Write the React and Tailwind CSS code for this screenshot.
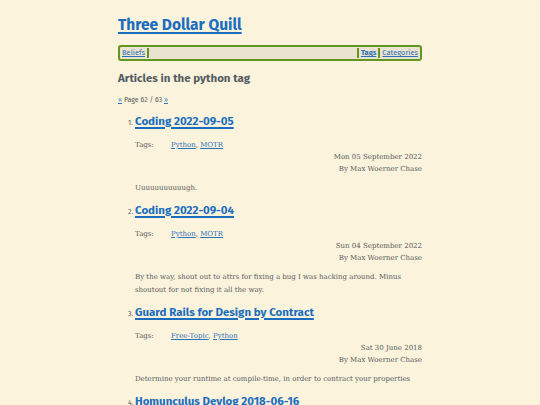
export default function App() {
  const articles = [
    {
      title: 'Coding 2022-09-05',
      tags: ['Python', 'MOTR'],
      date: 'Mon 05 September 2022',
      summary: 'Uuuuuuuuuuugh.',
    },
    {
      title: 'Coding 2022-09-04',
      tags: ['Python', 'MOTR'],
      date: 'Sun 04 September 2022',
      summary:
        'By the way, shout out to attrs for fixing a bug I was hacking around. Minus shoutout for not fixing it all the way.',
    },
    {
      title: 'Guard Rails for Design by Contract',
      tags: ['Free-Topic', 'Python'],
      date: 'Sat 30 June 2018',
      summary: 'Determine your runtime at compile-time, in order to contract your properties',
    },
    {
      title: 'Homunculus Devlog 2018-06-16',
      tags: ['Python'],
      date: 'Sat 16 June 2018',
      summary: '',
    },
  ]

  const heading = { fontFamily: '"Fira Sans", "Open Sans", "Noto Sans", sans-serif' }
  const body = { fontFamily: '"Roboto Slab", "DejaVu Serif", serif' }

  return (
    <div className="min-h-screen w-full bg-[#fcf3dc] text-[#555b60]" style={body}>
      <div className="mx-auto w-[304px] pt-[13px]">
        {/* Site title */}
        <h1 className="text-[15.5px] font-bold leading-[24px]" style={heading}>
          <a href="#" className="text-[#1a6dbf] underline decoration-2 underline-offset-2">Three Dollar Quill</a>
        </h1>

        {/* Nav */}
        <nav
          className="mt-[8px] flex h-[16px] items-center rounded-[3px] border-2 border-[#63961e] bg-[#eae3cf] px-[2px] text-[7.5px] leading-none"
          style={heading}
        >
          <a href="#" className="text-[#2d72b8] underline">Beliefs</a>
          <span className="ml-[2px] h-[10px] w-[2px] bg-[#63961e]" />
          <div className="flex-1" />
          <span className="mr-[2px] h-[10px] w-[2px] bg-[#63961e]" />
          <a href="#" className="font-bold text-[#2d72b8] underline">Tags</a>
          <span className="mx-[2px] h-[10px] w-[2px] bg-[#63961e]" />
          <a href="#" className="text-[#2d72b8] underline">Categories</a>
        </nav>

        {/* Heading */}
        <h2 className="mt-[9px] text-[11.5px] font-bold leading-[16px] text-[#545c63]" style={heading}>
          Articles in the python tag
        </h2>

        <p className="mt-[9px] text-[7px] leading-[10px]" style={heading}>
          <a href="#" className="text-[#2d72b8] underline">«</a> Page 62 / 63{' '}
          <a href="#" className="text-[#2d72b8] underline">»</a>
        </p>

        {/* Articles */}
        <ol className="mt-[8px] pl-[17px]">
          {articles.map((a, i) => (
            <li key={a.title} className="mb-[7px]">
              <div className="flex items-baseline">
                <span className="-ml-[7px] w-[7px] text-[7px]" style={heading}>{i + 1}.</span>
                <a
                  href="#"
                  className="text-[11.5px] font-bold leading-[16px] text-[#1a6dbf] underline decoration-[1.5px] underline-offset-2"
                  style={heading}
                >
                  {a.title}
                </a>
              </div>
              <div className="mt-[10px] flex text-[7px] leading-[12px]">
                <span className="w-[36px]">Tags:</span>
                <span>
                  {a.tags.map((t, j) => (
                    <span key={t}>
                      <a href="#" className="text-[#2d72b8] underline">{t}</a>
                      {j < a.tags.length - 1 ? ', ' : ''}
                    </span>
                  ))}
                </span>
              </div>
              <div className="text-right text-[7px] leading-[12px]">
                <div>{a.date}</div>
                <div>By Max Woerner Chase</div>
              </div>
              {a.summary && (
                <p className="mt-[7px] pr-[10px] text-[7px] leading-[13px]">{a.summary}</p>
              )}
            </li>
          ))}
        </ol>
      </div>
    </div>
  )
}
